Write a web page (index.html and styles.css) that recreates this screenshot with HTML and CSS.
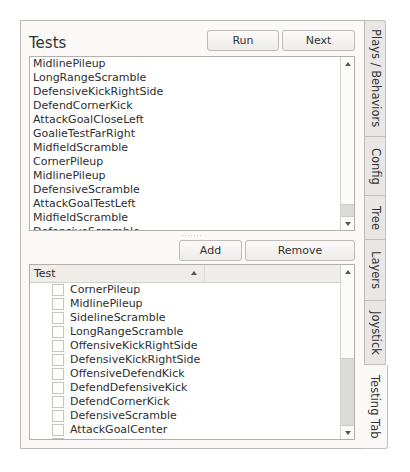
FILE: index.html
```html
<!DOCTYPE html>
<html lang="en">
<head>
  <meta charset="UTF-8">
  <title>Testing Tab</title>
  <link rel="stylesheet" href="styles.css">
</head>
<body>
  <div class="window">
    <div class="panel">
      <div class="top-row">
        <div class="title">Tests</div>
        <button class="btn btn-run">Run</button>
        <button class="btn btn-next">Next</button>
      </div>

      <div class="list-box">
        <div class="list-items">
          <div class="item">MidlinePileup</div>
          <div class="item">LongRangeScramble</div>
          <div class="item">DefensiveKickRightSide</div>
          <div class="item">DefendCornerKick</div>
          <div class="item">AttackGoalCloseLeft</div>
          <div class="item">GoalieTestFarRight</div>
          <div class="item">MidfieldScramble</div>
          <div class="item">CornerPileup</div>
          <div class="item">MidlinePileup</div>
          <div class="item">DefensiveScramble</div>
          <div class="item">AttackGoalTestLeft</div>
          <div class="item">MidfieldScramble</div>
          <div class="item">DefensiveScramble</div>
        </div>
        <div class="scrollbar">
          <div class="arrow up"></div>
          <div class="track"><div class="thumb thumb-list"></div></div>
          <div class="arrow down"></div>
        </div>
      </div>

      <div class="splitter"><span class="grip"></span></div>

      <div class="btn-row">
        <button class="btn btn-add">Add</button>
        <button class="btn btn-remove">Remove</button>
      </div>

      <div class="tree-box">
        <div class="tree-main">
          <div class="tree-header">
            <div class="col-head">Test<span class="sort"></span></div>
          </div>
          <div class="tree-items">
            <div class="row"><span class="check"></span>CornerPileup</div>
            <div class="row"><span class="check"></span>MidlinePileup</div>
            <div class="row"><span class="check"></span>SidelineScramble</div>
            <div class="row"><span class="check"></span>LongRangeScramble</div>
            <div class="row"><span class="check"></span>OffensiveKickRightSide</div>
            <div class="row"><span class="check"></span>DefensiveKickRightSide</div>
            <div class="row"><span class="check"></span>OffensiveDefendKick</div>
            <div class="row"><span class="check"></span>DefendDefensiveKick</div>
            <div class="row"><span class="check"></span>DefendCornerKick</div>
            <div class="row"><span class="check"></span>DefensiveScramble</div>
            <div class="row"><span class="check"></span>AttackGoalCenter</div>
            <div class="row"><span class="check"></span>AttackGoalCloseLeft</div>
          </div>
        </div>
        <div class="scrollbar">
          <div class="arrow up"></div>
          <div class="track"><div class="thumb thumb-tree"></div></div>
          <div class="arrow down"></div>
        </div>
      </div>
    </div>

    <div class="tabs">
      <div class="tab tab-plays">Plays / Behaviors</div>
      <div class="tab tab-config">Config</div>
      <div class="tab tab-tree">Tree</div>
      <div class="tab tab-layers">Layers</div>
      <div class="tab tab-joystick">Joystick</div>
      <div class="tab tab-testing active">Testing Tab</div>
    </div>
  </div>
</body>
</html>
```

FILE: styles.css
```css
body {
  margin: 0;
  background: #fff;
  font-family: "DejaVu Sans", sans-serif;
  font-size: 11px;
  color: #2e2e2e;
}
.window {
  display: flex;
  align-items: flex-start;
  padding: 20px 0 0 20px;
}
.panel {
  box-sizing: border-box;
  width: 345px;
  height: 429px;
  border: 1px solid #bdb9b4;
  background: #faf9f8;
  padding: 9px 9px 8px 8px;
  display: flex;
  flex-direction: column;
}
.top-row {
  display: flex;
  align-items: center;
  height: 21px;
  gap: 3px;
}
.title {
  flex: 1;
  font-size: 15px;
  padding-top: 5px;
  color: #333;
}
.btn {
  box-sizing: border-box;
  height: 21px;
  border: 1px solid #bfbbb6;
  border-radius: 3px;
  background: linear-gradient(#fbfaf9, #eeece9);
  font-family: "DejaVu Sans", sans-serif;
  font-size: 11px;
  color: #333;
  padding: 0;
}
.btn-run { width: 72px; }
.btn-next { width: 73px; }
.btn-add { width: 63px; }
.btn-remove { width: 110px; }

.list-box {
  box-sizing: border-box;
  margin-top: 5px;
  height: 175px;
  border: 1px solid #b3afaa;
  background: #fff;
  display: flex;
  overflow: hidden;
}
.list-items {
  flex: 1;
  padding: 0 0 0 3px;
  overflow: hidden;
}
.item, .row {
  height: 14px;
  line-height: 14px;
  white-space: nowrap;
}
.scrollbar {
  width: 13px;
  border-left: 1px solid #d6d3cf;
  background: #fbfbfa;
  display: flex;
  flex-direction: column;
}
.arrow {
  height: 13px;
  display: flex;
  align-items: center;
  justify-content: center;
}
.arrow::before {
  content: "";
  border-left: 3px solid transparent;
  border-right: 3px solid transparent;
}
.arrow.up::before { border-bottom: 4px solid #555; }
.arrow.down::before { border-top: 4px solid #555; }
.track {
  flex: 1;
  display: flex;
  flex-direction: column;
  justify-content: flex-end;
}
.thumb {
  background: #dcdad7;
  border-top: 1px solid #cfccc8;
  border-bottom: 1px solid #cfccc8;
}
.thumb-list { height: 11px; }
.thumb-tree { height: 66px; }

.splitter {
  height: 9px;
  display: flex;
  align-items: center;
  justify-content: center;
}
.grip {
  width: 20px;
  height: 1px;
  background: repeating-linear-gradient(90deg, #d5d2ce 0 1px, transparent 1px 3px);
}
.btn-row {
  display: flex;
  justify-content: flex-end;
  gap: 3px;
}
.tree-box {
  box-sizing: border-box;
  margin-top: 3px;
  height: 176px;
  border: 1px solid #b3afaa;
  background: #fff;
  display: flex;
  overflow: hidden;
}
.tree-main {
  flex: 1;
  overflow: hidden;
}
.tree-header {
  height: 17px;
  background: #efedea;
  border-bottom: 1px solid #d4d1cd;
  display: flex;
}
.col-head {
  box-sizing: border-box;
  width: 175px;
  height: 17px;
  line-height: 17px;
  padding-left: 4px;
  border-right: 1px solid #dcd9d5;
  position: relative;
}
.sort {
  position: absolute;
  right: 7px;
  top: 6px;
  border-left: 3px solid transparent;
  border-right: 3px solid transparent;
  border-bottom: 4px solid #555;
}
.row {
  display: flex;
  align-items: center;
  padding-left: 22px;
}
.check {
  box-sizing: border-box;
  width: 12px;
  height: 12px;
  border: 1px solid #c6c3bf;
  background: #fff;
  margin-right: 6px;
}

.tabs {
  display: flex;
  flex-direction: column;
}
.tab {
  box-sizing: border-box;
  width: 21px;
  writing-mode: vertical-rl;
  text-align: center;
  background: #e9e7e4;
  border: 1px solid #c3bfba;
  border-left: none;
  border-top: none;
  font-size: 11.5px;
  color: #333;
  line-height: 19px;
}
.tab-plays { height: 117px; border-top: 1px solid #c3bfba; border-radius: 0 3px 0 0; }
.tab-config { height: 59px; }
.tab-tree { height: 44px; }
.tab-layers { height: 61px; }
.tab-joystick { height: 64px; }
.tab.active {
  width: 24px;
  height: 84px;
  margin-left: -1px;
  background: #faf9f8;
  border-radius: 0 0 3px 0;
  line-height: 24px;
}
```
